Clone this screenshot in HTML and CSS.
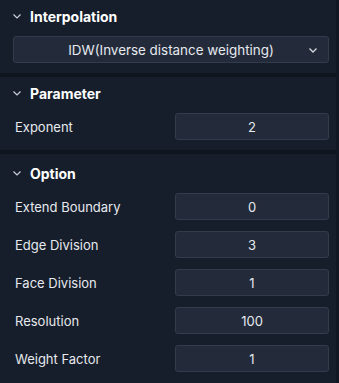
FILE: index.html
```html
<!DOCTYPE html>
<html lang="en">
<head>
    <meta charset="UTF-8">
    <meta name="viewport" content="width=device-width, initial-scale=1.0">
    <title>Interpolation Panel</title>
    <link rel="stylesheet" href="styles.css">
</head>
<body>
    <div class="panel">
        <div class="section section-first">
            <div class="section-header">
                <svg class="chevron" width="8" height="5" viewBox="0 0 8 5"><path d="M0.5 0.5 L4 4 L7.5 0.5" fill="none" stroke="#c9ced6" stroke-width="1.2"/></svg>
                <span>Interpolation</span>
            </div>
            <div class="dropdown">
                <span>IDW(Inverse distance weighting)</span>
                <svg class="dropdown-arrow" width="8" height="5" viewBox="0 0 8 5"><path d="M0.5 0.5 L4 4 L7.5 0.5" fill="none" stroke="#d5d9e0" stroke-width="1.3"/></svg>
            </div>
        </div>

        <div class="section section-param">
            <div class="section-header">
                <svg class="chevron" width="8" height="5" viewBox="0 0 8 5"><path d="M0.5 0.5 L4 4 L7.5 0.5" fill="none" stroke="#c9ced6" stroke-width="1.2"/></svg>
                <span>Parameter</span>
            </div>
            <div class="rows">
                <div class="row">
                    <label>Exponent</label>
                    <div class="field">2</div>
                </div>
            </div>
        </div>

        <div class="section section-option">
            <div class="section-header">
                <svg class="chevron" width="8" height="5" viewBox="0 0 8 5"><path d="M0.5 0.5 L4 4 L7.5 0.5" fill="none" stroke="#c9ced6" stroke-width="1.2"/></svg>
                <span>Option</span>
            </div>
            <div class="rows">
                <div class="row">
                    <label>Extend Boundary</label>
                    <div class="field">0</div>
                </div>
                <div class="row">
                    <label>Edge Division</label>
                    <div class="field">3</div>
                </div>
                <div class="row">
                    <label>Face Division</label>
                    <div class="field">1</div>
                </div>
                <div class="row">
                    <label>Resolution</label>
                    <div class="field">100</div>
                </div>
                <div class="row">
                    <label>Weight Factor</label>
                    <div class="field">1</div>
                </div>
            </div>
        </div>
    </div>
</body>
</html>
```

FILE: styles.css
```css
html, body {
    margin: 0;
    height: 100%;
}

body {
    font-family: 'Inter', 'Noto Sans', sans-serif;
    background-color: #161e2b;
    color: #e6e9ee;
    font-size: 13px;
}

.panel {
    width: 336px;
    min-height: 100%;
    border-right: 3px solid #111823;
}

.section {
    padding: 0 7px 10px 13px;
    border-bottom: 4px solid #0f151e;
}

.section-option {
    border-bottom: none;
    padding-top: 3px;
}

.section-header {
    height: 32px;
    display: flex;
    align-items: center;
    margin-bottom: 4px;
    font-size: 14px;
    font-weight: 700;
    color: #ffffff;
}

.chevron {
    margin-right: 9px;
}

.dropdown {
    position: relative;
    height: 27px;
    box-sizing: border-box;
    background-color: #232b3a;
    border: 1px solid #323c4d;
    border-radius: 3px;
    display: flex;
    align-items: center;
    justify-content: center;
    font-size: 13.4px;
}

.dropdown-arrow {
    position: absolute;
    right: 11px;
    top: 11px;
}

.rows {
    display: flex;
    flex-direction: column;
    gap: 11px;
}

.row {
    display: flex;
    align-items: center;
    justify-content: space-between;
    padding-left: 2px;
}

.field {
    width: 154px;
    height: 27px;
    box-sizing: border-box;
    background-color: #232b3a;
    border: 1px solid #323c4d;
    border-radius: 3px;
    display: flex;
    align-items: center;
    justify-content: center;
}
```
